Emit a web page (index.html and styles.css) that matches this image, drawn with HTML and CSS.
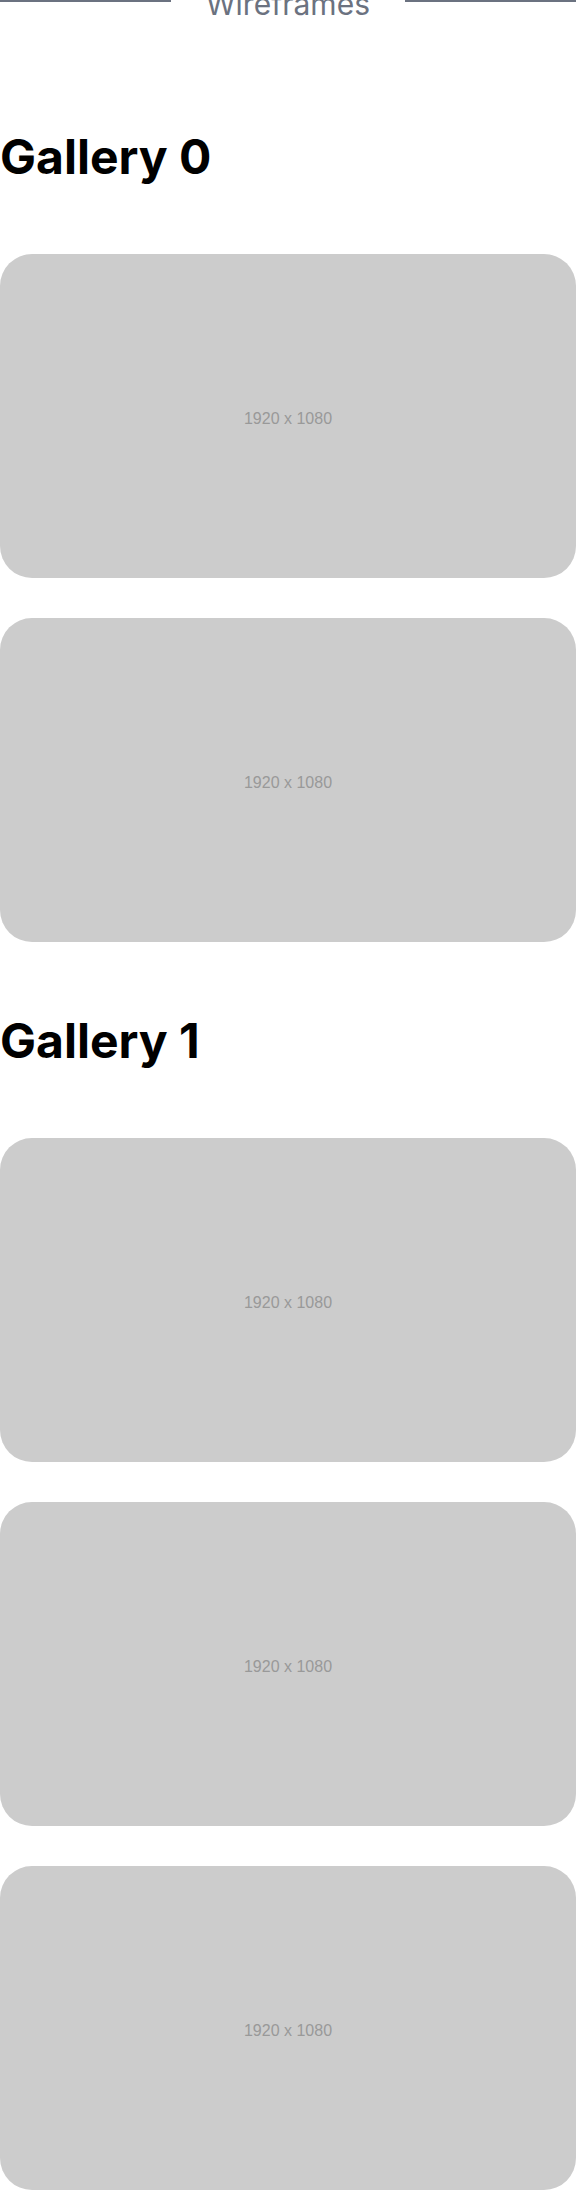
FILE: index.html
```html
<!DOCTYPE html>
<html lang="en">
<head>
<meta charset="utf-8">
<title>Wireframes</title>
<link rel="stylesheet" href="styles.css">
</head>
<body>
<div class="page">
  <header class="divider">
    <span class="divider-line"></span>
    <span class="divider-text">Wireframes</span>
    <span class="divider-line"></span>
  </header>
  <main class="galleries">
    <section class="gallery">
      <h2 class="gallery-title">Gallery 0</h2>
      <div class="gallery-items">
        <div class="placeholder"><span>1920 x 1080</span></div>
        <div class="placeholder"><span>1920 x 1080</span></div>
      </div>
    </section>
    <section class="gallery">
      <h2 class="gallery-title">Gallery 1</h2>
      <div class="gallery-items">
        <div class="placeholder"><span>1920 x 1080</span></div>
        <div class="placeholder"><span>1920 x 1080</span></div>
        <div class="placeholder"><span>1920 x 1080</span></div>
      </div>
    </section>
  </main>
</div>
</body>
</html>
```
FILE: styles.css
```css
html, body {
  margin: 0;
  padding: 0;
  background: #ffffff;
}

body {
  font-family: Inter, "Liberation Sans", sans-serif;
  color: #000000;
}

.page {
  width: 576px;
  padding-bottom: 8px;
}

.divider {
  display: flex;
  align-items: center;
  margin-top: -14px;
  margin-bottom: 111px;
}

.divider-line {
  flex: 1;
  height: 2px;
  background: #6b7280;
  margin-bottom: 6px;
}

.divider-text {
  font-size: 30px;
  line-height: 36px;
  color: #6b7280;
  padding: 0 35px;
}

.galleries {
  display: flex;
  flex-direction: column;
  gap: 75px;
}

.gallery-title {
  margin: 0 0 73px 0;
  font-size: 48px;
  line-height: 48px;
  font-weight: 700;
  letter-spacing: 0;
}

.gallery-items {
  display: flex;
  flex-direction: column;
  gap: 40px;
}

.placeholder {
  aspect-ratio: 16 / 9;
  background: #cccccc;
  border-radius: 32px;
  display: flex;
  align-items: center;
  justify-content: center;
}

.placeholder span {
  font-family: "Liberation Sans", Arial, sans-serif;
  font-size: 16px;
  line-height: 16px;
  padding-top: 5px;
  color: #999999;
}
```
